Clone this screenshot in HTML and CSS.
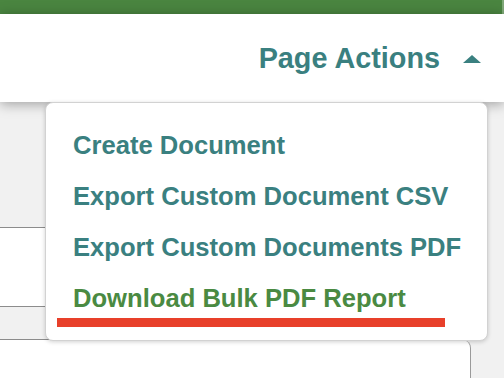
FILE: index.html
```html
<!DOCTYPE html>
<html lang="en">
    <head>
        <meta charset="UTF-8">
        <meta name="viewport" content="width=device-width, initial-scale=1.0">
        <title>Page Actions</title>
        <link rel="stylesheet" href="styles.css">
    </head>
    <body>
        <div id="App">
            <div class="TopBar"></div>
            <div class="Header">
                <button class="Toggle">
                    <span class="Label">Page Actions</span>
                    <span class="Caret"></span>
                </button>
            </div>
            <div class="Page">
                <div class="Main">
                    <div class="Band Gray Tall"></div>
                    <div class="Band White Mid"></div>
                    <div class="Band Gray Short"></div>
                    <div class="Card"></div>
                </div>
                <ul class="Menu">
                    <li class="Item">Create Document</li>
                    <li class="Item">Export Custom Document CSV</li>
                    <li class="Item">Export Custom Documents PDF</li>
                    <li class="Item Active">Download Bulk PDF Report</li>
                    <div class="Mark"></div>
                </ul>
            </div>
        </div>
    </body>
</html>
```

FILE: styles.css
```css
* {
    box-sizing: border-box;
    font-family: "Liberation Sans", Arial, Helvetica, sans-serif;
    margin: 0px;
    padding: 0px;
}
body {
    background-color: #F1F1F1;
    overflow: hidden;
}
#App {
    height: 378px;
    overflow: hidden;
    position: relative;
    width: 504px;
    .TopBar {
        background-color: #4A8540;
        border-right: 2px solid #7FA878;
        height: 14px;
    }
    .Header {
        align-items: center;
        background-color: #FFFFFF;
        box-shadow: 0px 2px 12px rgba(0, 0, 0, 0.35);
        display: flex;
        height: 88px;
        justify-content: flex-end;
        padding-right: 23px;
        position: relative;
        z-index: 2;
        .Toggle {
            align-items: center;
            background: none;
            border: none;
            color: #3A8080;
            display: flex;
            gap: 23px;
            .Label {
                font-size: 28.8px;
                font-weight: bold;
            }
            .Caret {
                border-bottom: 8px solid #3A8080;
                border-left: 9.5px solid transparent;
                border-right: 9.5px solid transparent;
                height: 0px;
                margin-top: 2px;
                width: 0px;
            }
        }
    }
    .Page {
        position: relative;
        .Main {
            display: flex;
            flex-direction: column;
            width: 471px;
            .Band {
                border-bottom: 1px solid #8C8C8C;
            }
            .Gray {
                background-color: #F1F1F1;
            }
            .White {
                background-color: #FFFFFF;
            }
            .Tall {
                height: 126px;
            }
            .Mid {
                height: 79px;
            }
            .Short {
                height: 33px;
            }
            .Card {
                background-color: #FFFFFF;
                border-right: 1px solid #9A9A9A;
                border-top-right-radius: 8px;
                height: 38px;
            }
        }
        .Menu {
            background-color: #FFFFFF;
            border: 1px solid #D2D2D2;
            border-radius: 8px;
            box-shadow: 0px 1px 4px rgba(0, 0, 0, 0.18);
            height: 239px;
            left: 45px;
            list-style: none;
            padding: 17px 0px 0px 27px;
            position: absolute;
            top: 0px;
            width: 443px;
            z-index: 3;
            .Item {
                color: #3A8080;
                font-size: 25.6px;
                font-weight: bold;
                line-height: 51px;
                white-space: nowrap;
            }
            .Active {
                color: #4A8A42;
            }
            .Mark {
                background-color: #E8402A;
                height: 9px;
                left: 11px;
                position: absolute;
                top: 215px;
                width: 388px;
            }
        }
    }
}
```
